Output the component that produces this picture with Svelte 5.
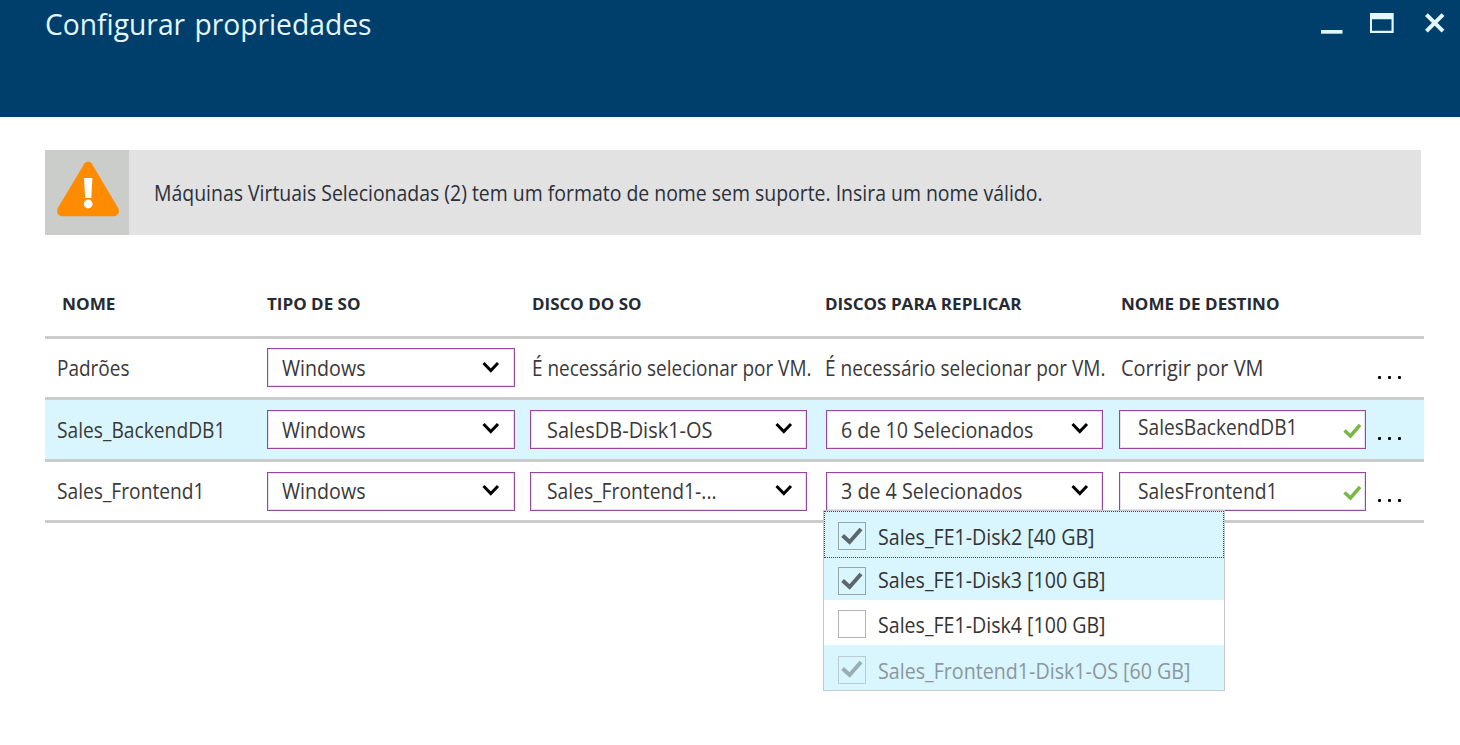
<script>
  const columns = [
    { label: 'NOME', width: 53, inset: 17 },
    { label: 'TIPO DE SO', width: 93, inset: 0 },
    { label: 'DISCO DO SO', width: 109, inset: 2 },
    { label: 'DISCOS PARA REPLICAR', width: 196, inset: -1 },
    { label: 'NOME DE DESTINO', width: 158, inset: 2 }
  ];

  const perVm = { text: 'É necessário selecionar por VM.', width: 279 };

  const rows = [
    {
      name: { text: 'Padrões', width: 72 },
      os: { text: 'Windows', width: 83 },
      osDisk: perVm,
      disks: { ...perVm, width: 280 },
      target: { text: 'Corrigir por VM', width: 142 },
      defaults: true
    },
    {
      name: { text: 'Sales_BackendDB1', width: 168 },
      os: { text: 'Windows', width: 83 },
      osDisk: { text: 'SalesDB-Disk1-OS', width: 165 },
      disks: { text: '6 de 10 Selecionados', width: 192 },
      target: { text: 'SalesBackendDB1', width: 159 },
      selected: true
    },
    {
      name: { text: 'Sales_Frontend1', width: 147 },
      os: { text: 'Windows', width: 83 },
      osDisk: { text: 'Sales_Frontend1-...', width: 169 },
      disks: { text: '3 de 4 Selecionados', width: 181 },
      target: { text: 'SalesFrontend1', width: 139 },
      open: true
    }
  ];

  const options = [
    { text: 'Sales_FE1-Disk2 [40 GB]', width: 216, checked: true, kind: 'focused' },
    { text: 'Sales_FE1-Disk3 [100 GB]', width: 227, checked: true, kind: 'second' },
    { text: 'Sales_FE1-Disk4 [100 GB]', width: 227, checked: false, kind: 'plain' },
    { text: 'Sales_Frontend1-Disk1-OS [60 GB]', width: 312, checked: true, kind: 'disabled' }
  ];

  // Condenses a label horizontally so that it takes up the given width.
  function fit(node, width) {
    const apply = () => {
      node.style.transform = 'none';
      const natural = node.getBoundingClientRect().width;
      if (natural) node.style.transform = `scaleX(${(width + 0.5) / natural})`;
    };
    apply();
    document.fonts.ready.then(apply);
  }
</script>

{#snippet label(item)}
  <span class="fit" use:fit={item.width}>{item.text}</span>
{/snippet}

{#snippet select(item)}
  <div class="field">
    {@render label(item)}
    <svg class="chevron" width="18" height="13" viewBox="0 0 18 13"><path d="M1.5 2 8.8 9.5 16 2" fill="none" stroke="#000" stroke-width="3" /></svg>
  </div>
{/snippet}

<div class="blade">
  <header>
    <h1><span class="fit" use:fit={326}>Configurar propriedades</span></h1>
    <div class="controls">
      <svg class="min" width="22" height="4" viewBox="0 0 22 4"><path d="M0 0h21.5v3.7H0z" fill="#e2f7ff" /></svg>
      <svg class="max" width="24" height="20" viewBox="0 0 24 20"><path fill-rule="evenodd" d="M0 0h23.7v20H0zM2 6.2v11.6h19.5V6.2z" fill="#e2f7ff" /></svg>
      <svg width="20" height="20" viewBox="0 0 20 20"><path d="m1.4 1.6 16.6 16.6M18 1.6 1.4 18.2" stroke="#e2f7ff" stroke-width="4" /></svg>
    </div>
  </header>

  <section class="alert">
    <div class="alert-icon">
      <svg width="84" height="85" viewBox="0 0 84 85">
        <path d="M39.6 13.3q3.6-3.8 7 0L73.2 58q2.6 6.3-3.5 8.2H16.3q-6.1-1.9-3.5-8.2z" fill="#ff8c00" />
        <path d="M39 28h8.4l-1.1 20h-6.2z" fill="#fff" />
        <circle cx="43.2" cy="54" r="4.4" fill="#fff" />
      </svg>
    </div>
    <p><span class="fit" use:fit={888}>Máquinas Virtuais Selecionadas (2) tem um formato de nome sem suporte. Insira um nome válido.</span></p>
  </section>

  <main>
    <div class="grid head">
      {#each columns as c}
        <div style:padding-left="{c.inset}px"><span class="fit" use:fit={c.width}>{c.label}</span></div>
      {/each}
    </div>
    {#each rows as row}
      <div class="grid row" class:selected={row.selected} class:defaults={row.defaults}>
        <div class="name">{@render label(row.name)}</div>
        <div class="cell os">{@render select(row.os)}</div>
        {#if row.defaults}
          <div class="text">{@render label(row.osDisk)}</div>
          <div class="text disks">{@render label(row.disks)}</div>
          <div class="text">{@render label(row.target)}</div>
        {:else}
          <div class="cell disk">{@render select(row.osDisk)}</div>
          <div class="cell replicate">
            {@render select(row.disks)}
            {#if row.open}
              <div class="menu">
                {#each options as o}
                  <div class="option {o.kind}">
                    <span class="box">
                      {#if o.checked}
                        <svg width="22" height="19" viewBox="0 0 22 19"><path d="M1.6 8.6 8.6 15 20 2" fill="none" stroke="#5b676c" stroke-width="4" /></svg>
                      {/if}
                    </span>
                    {@render label(o)}
                  </div>
                {/each}
              </div>
            {/if}
          </div>
          <div class="cell target">
            <div class="field">
              {@render label(row.target)}
              <svg class="valid" width="18" height="16" viewBox="0 0 18 16"><path d="M1.5 7.5 7.5 13 17 2" fill="none" stroke="#76b843" stroke-width="3.5" /></svg>
            </div>
          </div>
        {/if}
        <div class="more"><i></i><i></i><i></i></div>
      </div>
    {/each}
  </main>
</div>

<style>
  :global(body) { margin: 0; background: #fff; }
  .blade {
    height: 745px;
    overflow: hidden;
    box-sizing: border-box;
    font: 21px/30px "Open Sans", "Noto Sans", sans-serif;
    color: #3b3838;
  }
  .fit { display: inline-block; white-space: nowrap; transform-origin: 0 50%; margin-left: -1px; }
  svg { display: block; flex: none; }
  header {
    height: 117px;
    box-sizing: border-box;
    padding: 4px 15px 0 45px;
    background: #003e6c;
    display: flex;
    justify-content: space-between;
    align-items: flex-start;
  }
  h1 { margin: 0; font-size: 29px; font-weight: 400; line-height: 40px; word-spacing: 2px; color: #e2f7ff; width: 400px; }
  h1 .fit { margin-left: -0.5px; }
  .controls { display: flex; align-items: flex-start; padding-top: 9px; }
  .min { margin-top: 17px; }
  .max { margin: 0 31px 0 27px; }
  .alert {
    margin: 33px 39px 0 45px;
    height: 85px;
    background: #e2e2e2;
    display: flex;
    align-items: center;
    color: #2b303a;
  }
  .alert-icon { width: 84px; height: 85px; background: #cbcdcb; }
  .alert p { margin: 1px 0 0 26px; }
  main { margin: 50px 36px 0 45px; }
  .grid { display: grid; grid-template-columns: 222px 263px 296px 293px 258px 47px; align-items: center; }
  .grid > div { min-width: 0; }
  .head {
    height: 54px;
    border-bottom: 3px solid #ccc;
    box-sizing: border-box;
    font-size: 16.5px;
    font-weight: 700;
    color: #262b33;
    line-height: 38px;
    align-items: start;
  }
  .head > div { box-sizing: border-box; white-space: nowrap; }
  .head > div:nth-child(4) { margin-left: -1px; }
  .head .fit { margin-left: -0.5px; }
  .row { height: 58px; border-bottom: 3px solid #ccc; }
  .row.selected { height: 59px; background: #d9f6ff; }
  .name { padding-left: 13px; }
  .text { padding-left: 2px; }
  .text .fit { margin-left: -0.5px; }
  .text.disks { padding-left: 0; margin-left: -1px; }
  .field {
    height: 39px;
    box-sizing: border-box;
    border: 1px solid #9548a0;
    box-shadow: inset 0 0 0 1px #eedcf0;
    background: #fff;
    display: flex;
    align-items: center;
    justify-content: space-between;
    padding: 0 14px 0 15px;
  }
  .cell { position: relative; }
  .os .field { width: 248px; }
  .defaults .field { margin-top: -2px; }
  .defaults .field .fit { margin-top: 2px; }
  .disk .field { width: 277px; padding: 0 13px 0 17px; }
  .replicate .field { width: 277px; padding-right: 13px; }
  .target .field { width: 247px; padding: 0 4px 0 19px; }
  .selected .target .fit { margin-bottom: 5px; }
  .chevron { margin-top: -2px; }
  .defaults .chevron { margin-top: 0; }
  .valid { margin-top: 3px; }
  .more { display: flex; gap: 7px; padding: 18px 0 0 1px; }
  .more i { width: 3px; height: 3px; border-radius: 1px; background: #000; }
  .menu {
    position: absolute;
    z-index: 2;
    left: -3px;
    top: 38px;
    width: 402px;
    height: 181px;
    box-sizing: border-box;
    border: 1px solid #c6c8ca;
    background: #fff;
    display: flex;
    flex-direction: column;
  }
  .option {
    height: 45px;
    flex: none;
    box-sizing: border-box;
    display: flex;
    align-items: center;
    padding-left: 14px;
    background: #d9f5fe;
    color: #333;
  }
  .option .fit { margin-left: 12px; }
  .focused { height: 47px; padding: 4px 0 0 13px; border: 1px dotted #444; }
  .focused .fit { margin-top: 2px; }
  .second { height: 42px; }
  .second .fit { margin-top: 3px; }
  .second .box { margin-top: 5px; }
  .plain { background: #fff; }
  .plain .box { margin-top: 4px; border-color: #b3b3b3; }
  .plain .fit { margin-top: 6px; }
  .disabled { height: 45px; }
  .disabled .box { margin-top: 5px; opacity: .5; }
  .disabled .fit { margin-top: 8px; color: #8b979b; }
  .box {
    width: 28px;
    height: 28px;
    box-sizing: border-box;
    border: 1px solid #98a4a8;
    display: flex;
    align-items: center;
    justify-content: center;
  }
</style>
